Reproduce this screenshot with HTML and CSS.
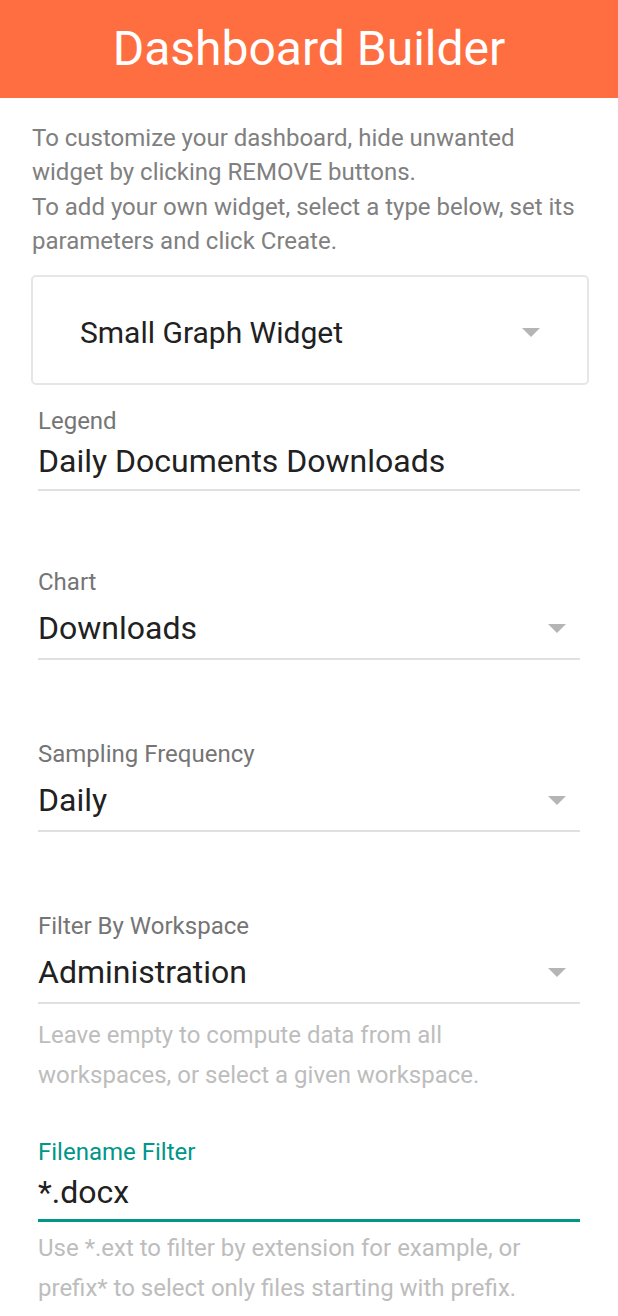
FILE: index.html
```html
<!DOCTYPE html>
<html>
<head>
<meta charset="utf-8">
<link rel="stylesheet" href="styles.css">
</head>
<body>
<header class="appbar"><h1 class="title">Dashboard Builder</h1></header>
<main class="content">
  <p class="intro">To customize your dashboard, hide unwanted widget by clicking REMOVE buttons.<br>To add your own widget, select a type below, set its parameters and click Create.</p>
  <div class="card-select">
    <span class="card-value">Small Graph Widget</span>
    <span class="arrow"></span>
  </div>

  <div class="field field-legend">
    <div class="label">Legend</div>
    <div class="input-row text-row"><span class="value">Daily Documents Downloads</span></div>
  </div>

  <div class="field field-chart">
    <div class="label">Chart</div>
    <div class="input-row select-row"><span class="value">Downloads</span><span class="arrow"></span></div>
  </div>

  <div class="field field-select">
    <div class="label">Sampling Frequency</div>
    <div class="input-row select-row"><span class="value">Daily</span><span class="arrow"></span></div>
  </div>

  <div class="field field-select">
    <div class="label">Filter By Workspace</div>
    <div class="input-row select-row"><span class="value">Administration</span><span class="arrow"></span></div>
    <p class="helper">Leave empty to compute data from all workspaces, or select a given workspace.</p>
  </div>

  <div class="field field-focused">
    <div class="label">Filename Filter</div>
    <div class="input-row text-row"><span class="value">*.docx</span></div>
    <p class="helper">Use *.ext to filter by extension for example, or prefix* to select only files starting with prefix.</p>
  </div>
</main>
</body>
</html>
```

FILE: styles.css
```css
* { box-sizing: border-box; }
html, body { margin: 0; padding: 0; background: #ffffff; }
body { font-family: Roboto, "Noto Sans", sans-serif; color: #212121; width: 618px; }

.appbar {
  height: 98px;
  background: #ff6e40;
  display: flex;
  align-items: center;
  justify-content: center;
}
.title {
  margin: 0;
  font-size: 48px;
  font-weight: 400;
  color: #ffffff;
  line-height: 1;
}

.content { padding: 0 0 20px; }

.intro {
  margin: 23px 32px 0;
  font-size: 24px;
  line-height: 34.3px;
  color: #808080;
}

.card-select {
  margin: 17px 29px 0 31px;
  height: 110px;
  border: 2px solid #e6e6e6;
  border-radius: 5px;
  display: flex;
  align-items: center;
  padding: 4px 47px 0 47px;
}
.card-value { flex: 1; font-size: 30px; color: #212121; }

.arrow {
  width: 0; height: 0;
  border-left: 9px solid transparent;
  border-right: 9px solid transparent;
  border-top: 9px solid #b5b5b5;
}

.field { margin: 0 38px; }
.field-legend { margin-top: 24px; }
.field-chart { margin-top: 79px; }
.field-select { margin-top: 82px; }
.field-focused { margin-top: 45px; }

.label {
  font-size: 24px;
  line-height: 24px;
  color: #757575;
}
.field-focused .label { color: #009688; }

.input-row {
  display: flex;
  align-items: center;
  border-bottom: 2px solid #e0e0e0;
}
.text-row { padding: 8px 0 8px; }
.select-row { padding: 14px 14px 10px 0; }
.field-focused .input-row { border-bottom: 3px solid #009688; padding-bottom: 7px; }

.value {
  flex: 1;
  font-size: 32px;
  line-height: 40px;
  color: #212121;
}

.helper {
  margin: 11px 0 0;
  padding-right: 40px;
  font-size: 24px;
  line-height: 40px;
  color: #bdbdbd;
}
.field-focused .helper { margin-top: 6px; }
```
